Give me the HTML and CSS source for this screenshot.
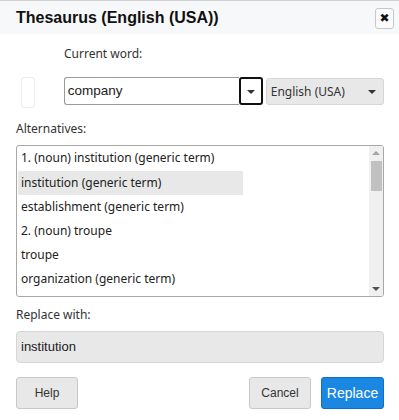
FILE: index.html
```html
<!DOCTYPE html>
<html>
<head>
<meta charset="utf-8">
<link rel="stylesheet" href="styles.css">
</head>
<body>
<div class="dialog">
  <div class="titlebar">
    <span class="title">Thesaurus (English (USA))</span>
    <span class="close">✖</span>
  </div>
  <div class="content">
    <div class="label indent">Current word:</div>
    <div class="word-row">
      <div class="icon-slot"></div>
      <div class="combo">
        <div class="combo-input">company</div>
        <div class="combo-btn"><span class="tri small"></span></div>
      </div>
      <div class="lang-select">
        <span>English (USA)</span>
        <span class="tri"></span>
      </div>
    </div>
    <div class="label alt-label">Alternatives:</div>
    <div class="listbox">
      <div class="list-items">
        <div class="item">1. (noun) institution (generic term)</div>
        <div class="item selected">institution (generic term)</div>
        <div class="item">establishment (generic term)</div>
        <div class="item">2. (noun) troupe</div>
        <div class="item">troupe</div>
        <div class="item">organization (generic term)</div>
      </div>
      <div class="scrollbar">
        <span class="arrow up"></span>
        <span class="thumb"></span>
        <span class="spacer"></span>
        <span class="arrow down"></span>
      </div>
    </div>
    <div class="label rep-label">Replace with:</div>
    <div class="replace-field">institution</div>
    <div class="buttons">
      <button class="btn">Help</button>
      <span class="grow"></span>
      <button class="btn">Cancel</button>
      <button class="btn primary">Replace</button>
    </div>
  </div>
</div>
</body>
</html>
```
FILE: styles.css
```css
html, body {
  margin: 0;
  padding: 0;
  background: #ffffff;
}
.dialog {
  width: 399px;
  height: 420px;
  background: #fff;
  font-family: "Noto Sans", "DejaVu Sans", sans-serif;
  color: #333;
}
.titlebar {
  height: 33px;
  border-top: 1px solid #d0d0d0;
  background: #f7f8f9;
  display: flex;
  align-items: center;
  padding: 0 5px 0 16px;
}
.title {
  font-family: "Liberation Sans", Arial, sans-serif;
  font-weight: bold;
  font-size: 16px;
  color: #111;
  flex: 1;
}
.close {
  width: 17px;
  height: 19px;
  border: 1px solid #c8c8c8;
  border-radius: 3px;
  background: #fbfbfb;
  font-size: 12px;
  line-height: 19px;
  text-align: center;
  color: #111;
  font-family: "DejaVu Sans", sans-serif;
  margin-top: 2px;
}
.content {
  padding: 0 15px 0 16px;
}
.label {
  font-size: 12px;
  line-height: 16px;
  color: #333;
}
.indent {
  margin-top: 12px;
  margin-left: 48px;
}
.word-row {
  display: flex;
  align-items: flex-start;
  margin-top: 15px;
  height: 30px;
}
.icon-slot {
  width: 12px;
  height: 29px;
  border: 1px solid #ececec;
  border-radius: 3px;
  margin-left: 5px;
  margin-right: 29px;
}
.combo {
  display: flex;
  height: 28px;
}
.combo-input {
  width: 171px;
  height: 26px;
  border: 1px solid #9a9a9a;
  border-right: none;
  border-radius: 3px 0 0 3px;
  font-family: "Liberation Sans", Arial, sans-serif;
  font-size: 13.5px;
  line-height: 26px;
  padding-left: 3px;
  color: #222;
}
.combo-btn {
  width: 20px;
  height: 24px;
  border: 2px solid #111;
  border-radius: 3px;
  display: flex;
  align-items: center;
  justify-content: center;
  padding-top: 2px;
  box-sizing: content-box;
  height: 22px;
  background: #fff;
}
.tri {
  width: 0;
  height: 0;
  border-left: 4px solid transparent;
  border-right: 4px solid transparent;
  border-top: 4px solid #333;
}
.tri.small {
  border-left-width: 4px;
  border-right-width: 4px;
  border-top-width: 4px;
}
.lang-select {
  margin-left: 3px;
  margin-top: 1px;
  width: 108px;
  height: 25px;
  border: 1px solid #d6d6d6;
  border-radius: 3px;
  background: #e8e8e8;
  display: flex;
  align-items: center;
  justify-content: space-between;
  padding: 0 7px 0 4px;
  font-size: 12px;
  color: #333;
}
.alt-label {
  margin-top: 14px;
}
.listbox {
  margin-top: 8px;
  height: 150px;
  border: 1px solid #a8a8a8;
  border-radius: 3px;
  display: flex;
  overflow: hidden;
}
.list-items {
  flex: 1;
  display: flex;
  flex-direction: column;
  align-items: flex-start;
}
.list-items .item {
  width: 222px;
  height: 24px;
  line-height: 24px;
  padding-left: 3px;
  font-size: 12px;
  color: #222;
  white-space: nowrap;
  margin-left: 1px;
}
.list-items .item.selected {
  background: #e8e8e8;
  margin-top: 1px;
  height: 24px;
}
.scrollbar {
  width: 14px;
  background: #f0f0f0;
  display: flex;
  flex-direction: column;
  align-items: center;
}
.scrollbar .arrow {
  width: 0;
  height: 0;
  border-left: 4px solid transparent;
  border-right: 4px solid transparent;
}
.scrollbar .up {
  border-bottom: 4px solid #a3a3a3;
  margin-top: 5px;
}
.scrollbar .down {
  border-top: 4px solid #505050;
  margin-bottom: 5px;
}
.scrollbar .thumb {
  width: 11px;
  height: 30px;
  background: #c1c1c1;
  margin-top: 6px;
}
.scrollbar .spacer {
  flex: 1;
}
.rep-label {
  margin-top: 10px;
}
.replace-field {
  margin-top: 8px;
  height: 30px;
  border: 1px solid #d6d6d6;
  border-radius: 4px;
  background: #e8e8e8;
  font-family: "Liberation Sans", Arial, sans-serif;
  font-size: 13px;
  line-height: 30px;
  padding-left: 4px;
  color: #222;
}
.buttons {
  display: flex;
  margin-top: 14px;
  gap: 10px;
}
.grow {
  flex: 1;
}
.btn {
  height: 32px;
  width: 62px;
  border: 1px solid #c8c8c8;
  border-radius: 3px;
  background: #e8e8e8;
  font-family: "Liberation Sans", Arial, sans-serif;
  font-size: 12px;
  color: #333;
  padding: 0;
}
.btn.primary {
  width: 63px;
  background: #1a87e3;
  border-color: #106fc4;
  color: #fff;
  font-size: 14px;
}
```
